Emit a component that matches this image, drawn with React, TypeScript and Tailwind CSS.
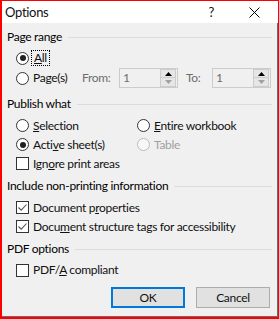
import React from "react";

const font = { fontFamily: 'Lato, "Noto Sans", sans-serif' };

const Radio = ({ checked, disabled }: { checked?: boolean; disabled?: boolean }) => (
  <span
    className={`w-[13px] h-[13px] rounded-full border flex items-center justify-center shrink-0 ${
      disabled ? "border-[#bcbcbc] bg-[#f7f7f7]" : "border-[#333333] bg-white"
    }`}
  >
    {checked && <span className="w-[6px] h-[6px] rounded-full bg-[#212121]" />}
  </span>
);

const Check = ({ checked }: { checked?: boolean }) => (
  <span className="w-[13px] h-[13px] border border-[#333333] bg-white flex items-center justify-center shrink-0">
    {checked && (
      <svg width="11" height="11" viewBox="0 0 11 11">
        <path d="M1.5 5.5 L4.2 8.2 L9.5 2.5" fill="none" stroke="#555555" strokeWidth="1.1" />
      </svg>
    )}
  </span>
);

const Header = ({ children }: { children: React.ReactNode }) => (
  <div className="h-[20px] flex items-center pl-[5px] pr-[5px]">
    <span className="text-black">{children}</span>
    <span className="flex-1 h-px bg-[#dcdcdc] ml-[6px]" />
  </div>
);

const Spin = () => (
  <div className="w-[59px] h-[20px] border border-[#cccccc] bg-[#f0f0f0] flex items-center">
    <span className="pl-[3px] text-[#6d6d6d] flex-1">1</span>
    <div className="w-[16px] h-[18px] flex flex-col mr-px">
      <div className="h-[9px] bg-[#e6e6e6] border border-[#cccccc] flex items-center justify-center">
        <svg width="7" height="4" viewBox="0 0 7 4">
          <path d="M0 4 L3.5 0 L7 4 Z" fill="#000000" />
        </svg>
      </div>
      <div className="h-[9px] bg-[#e6e6e6] border border-t-0 border-[#cccccc] flex items-center justify-center">
        <svg width="7" height="4" viewBox="0 0 7 4">
          <path d="M0 0 L3.5 4 L7 0 Z" fill="#a0a0a0" />
        </svg>
      </div>
    </div>
  </div>
);

export default function App() {
  return (
    <div
      className="w-[279px] h-[319px] border-l-2 border-t border-r border-b-2 border-[#ff0000] bg-[#f0f0f0] flex flex-col text-[12px] leading-none tracking-[-0.3px] text-[#111111]"
      style={font}
    >
      <div className="h-[22px] bg-white flex items-center pl-[3px] shrink-0 text-[13px]">
        <span>Options</span>
        <span className="ml-auto mr-[35px]">?</span>
        <svg width="11" height="11" viewBox="0 0 11 11" className="mr-[18px]">
          <path d="M0.5 0.5 L10.5 10.5 M10.5 0.5 L0.5 10.5" stroke="#000000" strokeWidth="1" />
        </svg>
      </div>

      <div className="flex-1 flex flex-col border-r border-b border-[#6d6d6d] pt-[4px]">
        <Header>Page range</Header>
        <div className="h-[20px] flex items-center pl-[14px] mt-px">
          <Radio checked />
          <span className="ml-[2px] px-[2px] h-[16px] flex items-center border border-dotted border-black">
            <u>A</u>ll
          </span>
        </div>
        <div className="h-[20px] flex items-center pl-[14px]">
          <Radio />
          <span className="ml-[4px] w-[49px]">
            Pa<u>g</u>e(s)
          </span>
          <span className="text-[#6d6d6d] w-[37px]">From:</span>
          <Spin />
          <span className="text-[#6d6d6d] ml-[8px] w-[26px]">To:</span>
          <Spin />
        </div>

        <div className="mt-[6px]">
          <Header>Publish what</Header>
        </div>
        <div className="h-[19px] flex items-center pl-[14px] mt-[2px]">
          <div className="w-[121px] flex items-center">
            <Radio />
            <span className="ml-[4px]">
              <u>S</u>election
            </span>
          </div>
          <Radio />
          <span className="ml-[4px]">
            <u>E</u>ntire workbook
          </span>
        </div>
        <div className="h-[19px] flex items-center pl-[14px]">
          <div className="w-[121px] flex items-center">
            <Radio checked />
            <span className="ml-[4px]">
              Acti<u>v</u>e sheet(s)
            </span>
          </div>
          <Radio disabled />
          <span className="ml-[4px] text-[#a0a0a0]">Table</span>
        </div>
        <div className="h-[19px] flex items-center pl-[14px]">
          <Check />
          <span className="ml-[4px]">
            Ign<u>o</u>re print areas
          </span>
        </div>

        <div className="mt-[3px]">
          <Header>Include non-printing information</Header>
        </div>
        <div className="h-[19px] flex items-center pl-[14px] mt-[2px]">
          <Check checked />
          <span className="ml-[4px]">
            Document p<u>r</u>operties
          </span>
        </div>
        <div className="h-[19px] flex items-center pl-[14px]">
          <Check checked />
          <span className="ml-[4px]">
            Docu<u>m</u>ent structure tags for accessibility
          </span>
        </div>

        <div className="mt-[3px]">
          <Header>PDF options</Header>
        </div>
        <div className="h-[20px] flex items-center pl-[14px] mt-px">
          <Check />
          <span className="ml-[4px]">
            PDF/<u>A</u> compliant
          </span>
        </div>

        <div className="flex justify-end gap-[11px] pr-[7px] mt-[7px]">
          <button className="w-[74px] h-[21px] border-2 border-[#0078d7] bg-[#e1e1e1]">OK</button>
          <button className="w-[74px] h-[21px] border border-[#adadad] bg-[#e1e1e1]">Cancel</button>
        </div>
      </div>
    </div>
  );
}
